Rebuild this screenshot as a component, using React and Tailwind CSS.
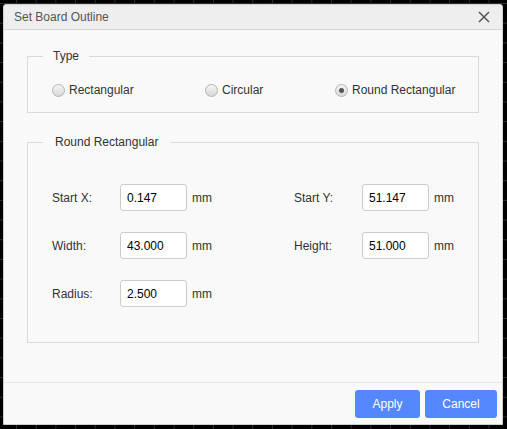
import React, { useState } from 'react';

const Radio = ({ label, checked, onSelect, className }) => (
  <label className={`flex items-center cursor-pointer ${className}`} onClick={onSelect}>
    <span className="w-[13px] h-[13px] rounded-full border border-[#b3b3b3] bg-[linear-gradient(to_bottom,#f4f4f4,#d9d9d9)] flex items-center justify-center">
      {checked && <span className="w-[5px] h-[5px] rounded-full bg-[#555555]" />}
    </span>
    <span className="ml-[4px] text-[12px] text-[#333333]">{label}</span>
  </label>
);

const Field = ({ label, value, onChange, className = '' }) => (
  <div className={`flex items-center ${className}`}>
    <span className="w-[68px] text-[12px] text-[#333333]">{label}</span>
    <input
      value={value}
      onChange={(e) => onChange(e.target.value)}
      className="w-[67px] h-[27px] bg-white border border-[#cccccc] rounded-[3px] pl-[6px] text-[12px] text-black outline-none"
    />
    <span className="ml-[5px] text-[12px] text-[#333333]">mm</span>
  </div>
);

export default function App() {
  const [type, setType] = useState('round');
  const [vals, setVals] = useState({
    startX: '0.147',
    startY: '51.147',
    width: '43.000',
    height: '51.000',
    radius: '2.500',
  });

  const set = (k) => (v) => setVals({ ...vals, [k]: v });

  return (
    <div className="w-[507px] h-[429px] overflow-hidden font-['Liberation_Sans',Arial,sans-serif] bg-black bg-[linear-gradient(to_right,#2e2e2e_1px,transparent_1px),linear-gradient(to_bottom,#2e2e2e_1px,transparent_1px)] bg-[size:19.7px_19.7px] bg-[position:16px_3px] pt-[4px] pl-[3px]">
      <div className="w-[500px] h-[421px] flex flex-col bg-[#f9f9f9] border border-[#d0d0d0] rounded-t-[3px]">
        {/* title bar */}
        <div className="h-[25px] shrink-0 flex items-center justify-between bg-[#eeeeee] border-b border-[#d4d4d4] rounded-t-[3px] pl-[10px] pr-[12px]">
          <span className="text-[12px] text-[#555555]">Set Board Outline</span>
          <svg width="12" height="12" viewBox="0 0 12 12" className="text-[#555555]">
            <path d="M1 1L11 11M11 1L1 11" stroke="currentColor" strokeWidth="1.5" />
          </svg>
        </div>

        {/* body */}
        <div className="flex-1 px-[23px] pt-[17px]">
          <fieldset className="min-w-0 border border-[#d9d9d9]">
            <legend className="ml-[15px] px-[10px] text-[12px] text-[#333333]">Type</legend>
            <div className="flex items-center pl-[24px] pt-[16px] pb-[13px]">
              <Radio className="w-[153px]" label="Rectangular" checked={type === 'rect'} onSelect={() => setType('rect')} />
              <Radio className="w-[130px]" label="Circular" checked={type === 'circle'} onSelect={() => setType('circle')} />
              <Radio label="Round Rectangular" checked={type === 'round'} onSelect={() => setType('round')} />
            </div>
          </fieldset>

          <fieldset className="min-w-0 mt-[20px] border border-[#d9d9d9]">
            <legend className="ml-[15px] px-[12px] text-[12px] text-[#333333]">Round Rectangular</legend>
            <div className="flex flex-col gap-[21px] pl-[24px] pt-[33px] pb-[35px]">
              <div className="flex">
                <Field className="w-[242px]" label="Start X:" value={vals.startX} onChange={set('startX')} />
                <Field label="Start Y:" value={vals.startY} onChange={set('startY')} />
              </div>
              <div className="flex">
                <Field className="w-[242px]" label="Width:" value={vals.width} onChange={set('width')} />
                <Field label="Height:" value={vals.height} onChange={set('height')} />
              </div>
              <Field label="Radius:" value={vals.radius} onChange={set('radius')} />
            </div>
          </fieldset>
        </div>

        {/* footer */}
        <div className="h-[42px] shrink-0 border-t border-[#e6e6e6] flex items-center justify-end gap-[5px] pr-[5px]">
          <button className="w-[65px] h-[28px] rounded-[3px] bg-[#5588ff] text-white text-[12px]">Apply</button>
          <button className="w-[72px] h-[28px] rounded-[3px] bg-[#5588ff] text-white text-[12px]">Cancel</button>
        </div>
      </div>
    </div>
  );
}
